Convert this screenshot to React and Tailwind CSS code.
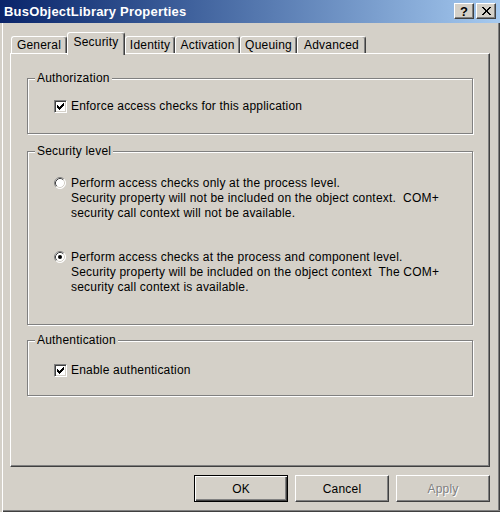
import React from 'react';

const tabs = [
  { label: 'General', w: 'w-[56px]' },
  { label: 'Security', w: 'w-[58px]', active: true },
  { label: 'Identity', w: 'w-[50px]' },
  { label: 'Activation', w: 'w-[65px]' },
  { label: 'Queuing', w: 'w-[57px]' },
  { label: 'Advanced', w: 'w-[69px]' },
];

function CheckBox() {
  return (
    <span className="w-[13px] h-[13px] shrink-0 bg-white border border-t-[#808080] border-l-[#808080] border-r-white border-b-white shadow-[inset_1px_1px_0_#404040,inset_-1px_-1px_0_#d4d0c8] flex items-center justify-center">
      <svg width="7" height="7" viewBox="0 0 7 7" shapeRendering="crispEdges">
        <path d="M0 2h1v3h-1z M1 3h1v3h-1z M2 4h1v3h-1z M3 3h1v3h-1z M4 2h1v3h-1z M5 1h1v3h-1z M6 0h1v3h-1z" fill="#000" />
      </svg>
    </span>
  );
}

function Radio({ checked }) {
  return (
    <svg width="12" height="12" viewBox="0 0 12 12" className="shrink-0 mt-[1px]">
      <circle cx="6" cy="6" r="5.5" fill="#fff" />
      <path d="M2.11 9.89 A5.5 5.5 0 0 1 9.89 2.11" stroke="#808080" fill="none" />
      <path d="M9.89 2.11 A5.5 5.5 0 0 1 2.11 9.89" stroke="#fff" fill="none" />
      <path d="M2.82 9.18 A4.5 4.5 0 0 1 9.18 2.82" stroke="#404040" fill="none" />
      <path d="M9.18 2.82 A4.5 4.5 0 0 1 2.82 9.18" stroke="#d4d0c8" fill="none" />
      {checked && <circle cx="6" cy="6" r="2" fill="#000" />}
    </svg>
  );
}

function Group({ label, className, children }) {
  return (
    <div className={`relative border border-[#808080] shadow-[1px_1px_0_#fff,inset_1px_1px_0_#fff] ${className}`}>
      <span className="absolute -top-[8px] left-[7px] px-[2px] bg-[#d4d0c8] leading-[14px]">{label}</span>
      {children}
    </div>
  );
}

function Button({ children, isDefault, disabled }) {
  const frame = isDefault
    ? 'border border-black shadow-[inset_1px_1px_0_#fff,inset_-1px_-1px_0_#404040,inset_-2px_-2px_0_#808080]'
    : 'border border-t-white border-l-white border-r-[#404040] border-b-[#404040] shadow-[inset_-1px_-1px_0_#808080]';
  return (
    <div className={`w-[94px] h-[27px] flex items-center justify-center ${frame} ${disabled ? 'text-[#808080] [text-shadow:1px_1px_0_#fff]' : 'text-black'}`}>
      {children}
    </div>
  );
}

export default function App() {
  return (
    <div className="w-[500px] h-[512px] bg-[#d4d0c8] overflow-hidden flex flex-col text-[12px] tracking-[0.2px] text-black font-['Liberation_Sans',Arial,sans-serif]">
      {/* Title bar */}
      <div className="h-[23px] shrink-0 flex items-center justify-between pl-[4px] pr-[4px] bg-gradient-to-r from-[#0a246a] to-[#a6caf0]">
        <span className="text-white font-bold text-[13px] leading-none">BusObjectLibrary Properties</span>
        <div className="flex gap-[2px] mt-[-1px]">
          <div className="w-[20px] h-[16px] bg-[#d4d0c8] border border-t-white border-l-white border-r-[#404040] border-b-[#404040] shadow-[inset_-1px_-1px_0_#808080] flex items-center justify-center font-bold text-[13px] leading-none tracking-normal">?</div>
          <div className="w-[20px] h-[16px] bg-[#d4d0c8] border border-t-white border-l-white border-r-[#404040] border-b-[#404040] shadow-[inset_-1px_-1px_0_#808080] flex items-center justify-center">
            <svg width="9" height="8" viewBox="0 0 9 8" shapeRendering="crispEdges">
              <path d="M0 0h2l2.5 3l2.5-3h2l-3.5 4l3.5 4h-2l-2.5-3l-2.5 3h-2l3.5-4z" fill="#000" />
            </svg>
          </div>
        </div>
      </div>

      {/* Body */}
      <div className="flex-1 flex flex-col px-[10px] pt-[9px] shadow-[inset_2px_0_0_#d4d0c8,inset_3px_0_0_#fff,inset_0_-1px_0_#404040,inset_0_-2px_0_#808080,inset_-1px_0_0_#404040,inset_-2px_0_0_#808080]">
        {/* Tabs */}
        <div className="flex items-end h-[21px] pl-[1px] relative z-10">
          {tabs.map(t => (
            <div
              key={t.label}
              className={`${t.w} border-t border-l border-white border-r border-r-[#404040] rounded-t-[3px] shadow-[inset_-1px_0_0_#808080] flex justify-center leading-[14px] bg-[#d4d0c8] ${t.active ? 'h-[23px] -mb-[2px] pt-[2px]' : 'h-[17px] pt-[1px]'}`}
            >
              {t.label}
            </div>
          ))}
        </div>

        {/* Panel */}
        <div className="h-[414px] flex flex-col pl-[16px] pr-[16px] border border-t-white border-l-white border-r-[#404040] border-b-[#404040] shadow-[inset_-1px_-1px_0_#808080]">
          <Group label="Authorization" className="mt-[24px] h-[56px] pl-[26px] pt-[20px]">
            <div className="flex items-center gap-[4px] leading-[14px]">
              <CheckBox />
              <span>Enforce access checks for this application</span>
            </div>
          </Group>

          <Group label="Security level" className="mt-[17px] h-[174px] pl-[26px] pt-[24px]">
            <div className="flex items-start gap-[5px]">
              <Radio />
              <p className="leading-[15px] whitespace-pre">
                {'Perform access checks only at the process level.\nSecurity property will not be included on the object context.  COM+\nsecurity call context will not be available.'}
              </p>
            </div>
            <div className="flex items-start gap-[5px] mt-[29px]">
              <Radio checked />
              <p className="leading-[15px] whitespace-pre">
                {'Perform access checks at the process and component level.\nSecurity property will be included on the object context  The COM+\nsecurity call context is available.'}
              </p>
            </div>
          </Group>

          <Group label="Authentication" className="mt-[15px] h-[56px] pl-[26px] pt-[22px]">
            <div className="flex items-center gap-[4px] leading-[14px]">
              <CheckBox />
              <span>Enable authentication</span>
            </div>
          </Group>
        </div>

        {/* Buttons */}
        <div className="flex justify-end gap-[7px] mt-[8px] pr-[0px]">
          <Button isDefault>OK</Button>
          <Button>Cancel</Button>
          <Button disabled>Apply</Button>
        </div>
      </div>
    </div>
  );
}
